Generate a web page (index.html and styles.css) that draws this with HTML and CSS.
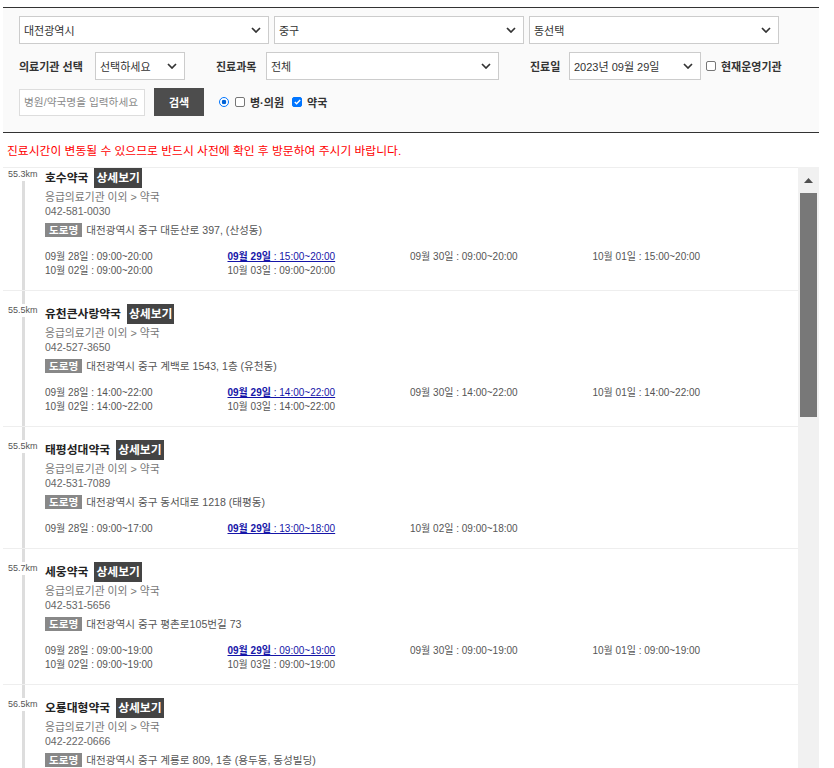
FILE: index.html
```html
<!DOCTYPE html>
<html lang="ko">
<head>
<meta charset="utf-8">
<title>약국 찾기</title>
<link rel="stylesheet" href="styles.css">
</head>
<body>
<div class="search">
  <div class="row">
    <div class="sel w250"><span>대전광역시</span><svg class="chev" width="10" height="6" viewBox="0 0 10 6"><path d="M1 1l4 4 4-4" fill="none" stroke="#333" stroke-width="1.7"/></svg></div>
    <div class="sel w250"><span>중구</span><svg class="chev" width="10" height="6" viewBox="0 0 10 6"><path d="M1 1l4 4 4-4" fill="none" stroke="#333" stroke-width="1.7"/></svg></div>
    <div class="sel w250"><span>동선택</span><svg class="chev" width="10" height="6" viewBox="0 0 10 6"><path d="M1 1l4 4 4-4" fill="none" stroke="#333" stroke-width="1.7"/></svg></div>
  </div>
  <div class="row">
    <span class="lbl l-inst">의료기관 선택</span>
    <div class="sel w90"><span>선택하세요</span><svg class="chev" width="10" height="6" viewBox="0 0 10 6"><path d="M1 1l4 4 4-4" fill="none" stroke="#333" stroke-width="1.7"/></svg></div>
    <span class="lbl l-dept">진료과목</span>
    <div class="sel w233"><span>전체</span><svg class="chev" width="10" height="6" viewBox="0 0 10 6"><path d="M1 1l4 4 4-4" fill="none" stroke="#333" stroke-width="1.7"/></svg></div>
    <span class="lbl l-date">진료일</span>
    <div class="sel w132"><span>2023년 09월 29일</span><svg class="chev" width="10" height="6" viewBox="0 0 10 6"><path d="M1 1l4 4 4-4" fill="none" stroke="#333" stroke-width="1.7"/></svg></div>
    <span class="cb"></span>
    <span class="lbl">현재운영기관</span>
  </div>
  <div class="row">
    <input class="kw" type="text" placeholder="병원/약국명을 입력하세요">
    <button class="btn" type="button">검색</button>
    <span class="radio"></span>
    <span class="cb"></span>
    <span class="lbl">병·의원</span>
    <span class="cb on"><svg width="7" height="6" viewBox="0 0 7 6"><path d="M0.8 3l1.8 1.8L6.2 1" fill="none" stroke="#fff" stroke-width="1.4"/></svg></span>
    <span class="lbl">약국</span>
  </div>
</div>

<p class="notice">진료시간이 변동될 수 있으므로 반드시 사전에 확인 후 방문하여 주시기 바랍니다.</p>

<div class="list">
  <div class="list-inner">
    <div class="item">
      <div class="dist">55.3km</div>
      <div class="info">
        <div class="title">호수약국<span class="more">상세보기</span></div>
        <div class="cat">응급의료기관 이외 &gt; 약국</div>
        <div class="tel">042-581-0030</div>
        <div class="addr"><span class="tag">도로명</span><span>대전광역시 중구 대둔산로 397, (산성동)</span></div>
        <div class="sched">
          <span>09월 28일 : 09:00~20:00</span>
          <a class="today"><b>09월 29일</b> : 15:00~20:00</a>
          <span>09월 30일 : 09:00~20:00</span>
          <span>10월 01일 : 15:00~20:00</span>
          <span>10월 02일 : 09:00~20:00</span>
          <span>10월 03일 : 09:00~20:00</span>
        </div>
      </div>
    </div>
    <div class="item">
      <div class="dist">55.5km</div>
      <div class="info">
        <div class="title">유천큰사랑약국<span class="more">상세보기</span></div>
        <div class="cat">응급의료기관 이외 &gt; 약국</div>
        <div class="tel">042-527-3650</div>
        <div class="addr"><span class="tag">도로명</span><span>대전광역시 중구 계백로 1543, 1층 (유천동)</span></div>
        <div class="sched">
          <span>09월 28일 : 14:00~22:00</span>
          <a class="today"><b>09월 29일</b> : 14:00~22:00</a>
          <span>09월 30일 : 14:00~22:00</span>
          <span>10월 01일 : 14:00~22:00</span>
          <span>10월 02일 : 14:00~22:00</span>
          <span>10월 03일 : 14:00~22:00</span>
        </div>
      </div>
    </div>
    <div class="item">
      <div class="dist">55.5km</div>
      <div class="info">
        <div class="title">태평성대약국<span class="more">상세보기</span></div>
        <div class="cat">응급의료기관 이외 &gt; 약국</div>
        <div class="tel">042-531-7089</div>
        <div class="addr"><span class="tag">도로명</span><span>대전광역시 중구 동서대로 1218 (태평동)</span></div>
        <div class="sched">
          <span>09월 28일 : 09:00~17:00</span>
          <a class="today"><b>09월 29일</b> : 13:00~18:00</a>
          <span>10월 02일 : 09:00~18:00</span>
        </div>
      </div>
    </div>
    <div class="item">
      <div class="dist">55.7km</div>
      <div class="info">
        <div class="title">세웅약국<span class="more">상세보기</span></div>
        <div class="cat">응급의료기관 이외 &gt; 약국</div>
        <div class="tel">042-531-5656</div>
        <div class="addr"><span class="tag">도로명</span><span>대전광역시 중구 평촌로105번길 73</span></div>
        <div class="sched">
          <span>09월 28일 : 09:00~19:00</span>
          <a class="today"><b>09월 29일</b> : 09:00~19:00</a>
          <span>09월 30일 : 09:00~19:00</span>
          <span>10월 01일 : 09:00~19:00</span>
          <span>10월 02일 : 09:00~19:00</span>
          <span>10월 03일 : 09:00~19:00</span>
        </div>
      </div>
    </div>
    <div class="item">
      <div class="dist">56.5km</div>
      <div class="info">
        <div class="title">오룡대형약국<span class="more">상세보기</span></div>
        <div class="cat">응급의료기관 이외 &gt; 약국</div>
        <div class="tel">042-222-0666</div>
        <div class="addr"><span class="tag">도로명</span><span>대전광역시 중구 계룡로 809, 1층 (용두동, 동성빌딩)</span></div>
      </div>
    </div>
  </div>
  <div class="vscroll">
    <div class="arrow"><svg width="9" height="5" viewBox="0 0 9 5"><path d="M0 5L4.5 0 9 5z" fill="#505050"/></svg></div>
    <div class="thumb"></div>
  </div>
</div>
</body>
</html>
```

FILE: styles.css
```css
html, body {
  overflow: hidden;
}
body {
  margin: 7px 15px 0 3px;
  background: #fff;
  font-family: "Liberation Sans", "Noto Sans CJK KR", sans-serif;
  color: #333;
}

/* search box */
.search {
  background: #fafafa;
  border-top: 1px solid #333;
  border-bottom: 1px solid #333;
  padding: 8px 16px 16px;
  display: flex;
  flex-direction: column;
  gap: 8px;
}
.row {
  display: flex;
  align-items: center;
  height: 28px;
}
.row:first-child {
  gap: 5px;
}
.sel {
  box-sizing: border-box;
  height: 28px;
  background: #fff;
  border: 1px solid #ccc;
  display: flex;
  align-items: center;
  justify-content: space-between;
  padding: 0 7px 0 4px;
  font-size: 11px;
  color: #333;
  white-space: nowrap;
}
.sel .chev {
  flex: none;
}
.w250 { width: 250px; }
.w90 { width: 90px; }
.w233 { width: 233px; }
.w132 { width: 132px; }

.lbl {
  font-size: 11px;
  font-weight: 700;
  color: #333;
  white-space: nowrap;
}
.l-inst { width: 76px; }
.l-dept { width: 50px; margin-left: 31px; }
.l-date { width: 39px; margin-left: 31px; }

.cb {
  box-sizing: border-box;
  width: 10px;
  height: 10px;
  border: 1px solid #767676;
  border-radius: 2px;
  background: #fff;
  margin: 0 5px;
  display: inline-flex;
  align-items: center;
  justify-content: center;
}
.cb.on {
  background: #0075ff;
  border-color: #0075ff;
  margin-left: 8px;
}
.radio {
  box-sizing: border-box;
  width: 10px;
  height: 10px;
  border-radius: 50%;
  border: 1.5px solid #0075ff;
  background: radial-gradient(circle, #0062d6 0 2px, #fff 2.6px);
  margin-left: 15px;
  margin-right: 1px;
}

.kw {
  box-sizing: border-box;
  width: 126px;
  height: 27px;
  border: 1px solid #ddd;
  background: #fff;
  padding: 0 4px;
  font-family: inherit;
  font-size: 10.7px;
  color: #333;
  outline: none;
  margin: 0 9px 0 0;
}
.kw::placeholder {
  color: #8a8a8a;
}
.btn {
  width: 50px;
  height: 28px;
  border: 0;
  background: #4d4d4d;
  color: #fff;
  font-family: inherit;
  font-size: 11px;
  font-weight: 700;
  padding: 0;
}

/* notice */
.notice {
  margin: 10px 0 8px;
  padding-left: 4px;
  font-size: 11.8px;
  line-height: 16px;
  color: #f00;
}

/* list */
.list {
  display: flex;
  height: 601px;
  overflow: hidden;
}
.list-inner {
  flex: 1;
  min-width: 0;
  border-top: 1px solid #eee;
  background: linear-gradient(to right, transparent 19px, #ddd 19px, #ddd 22px, transparent 22px);
}
.vscroll {
  flex: none;
  width: 21px;
  background: #f1f1f1;
  display: flex;
  flex-direction: column;
}
.arrow {
  height: 26px;
  display: flex;
  align-items: center;
  justify-content: center;
}
.thumb {
  height: 224px;
  margin: 0 2px;
  background: #787878;
}

.item {
  display: flex;
  border-bottom: 1px solid #eee;
  padding: 13px 0 12px;
}
.item:first-child {
  padding-top: 0;
}
.dist {
  box-sizing: border-box;
  flex: none;
  width: 42px;
  align-self: flex-start;
  padding-left: 5px;
  background: #fff;
  font-size: 9px;
  line-height: 13px;
  color: #555;
}
.info {
  flex: 1;
  min-width: 0;
}
.title {
  font-size: 11.8px;
  font-weight: 700;
  line-height: 20px;
  color: #222;
}
.more {
  display: inline-block;
  vertical-align: top;
  margin-left: 6px;
  padding: 0 2px;
  line-height: 20px;
  background: #444;
  color: #fff;
}
.cat {
  margin-top: 2px;
  font-size: 10.8px;
  line-height: 14px;
  color: #777;
}
.tel {
  font-size: 10.5px;
  line-height: 14px;
  color: #666;
}
.addr {
  margin-top: 5px;
  display: flex;
  align-items: center;
  gap: 4px;
  font-size: 10.6px;
  line-height: 14px;
  color: #555;
}
.tag {
  background: #888;
  color: #fff;
  font-weight: 700;
  font-size: 10.6px;
  padding: 0 4px;
  line-height: 14px;
}
.sched {
  margin-top: 13px;
  display: grid;
  grid-template-columns: repeat(4, 182.5px);
  font-size: 10px;
  line-height: 14px;
  color: #555;
  white-space: nowrap;
}
.today {
  color: #1515a8;
  text-decoration: underline;
}
.today b {
  font-weight: 700;
}
```
